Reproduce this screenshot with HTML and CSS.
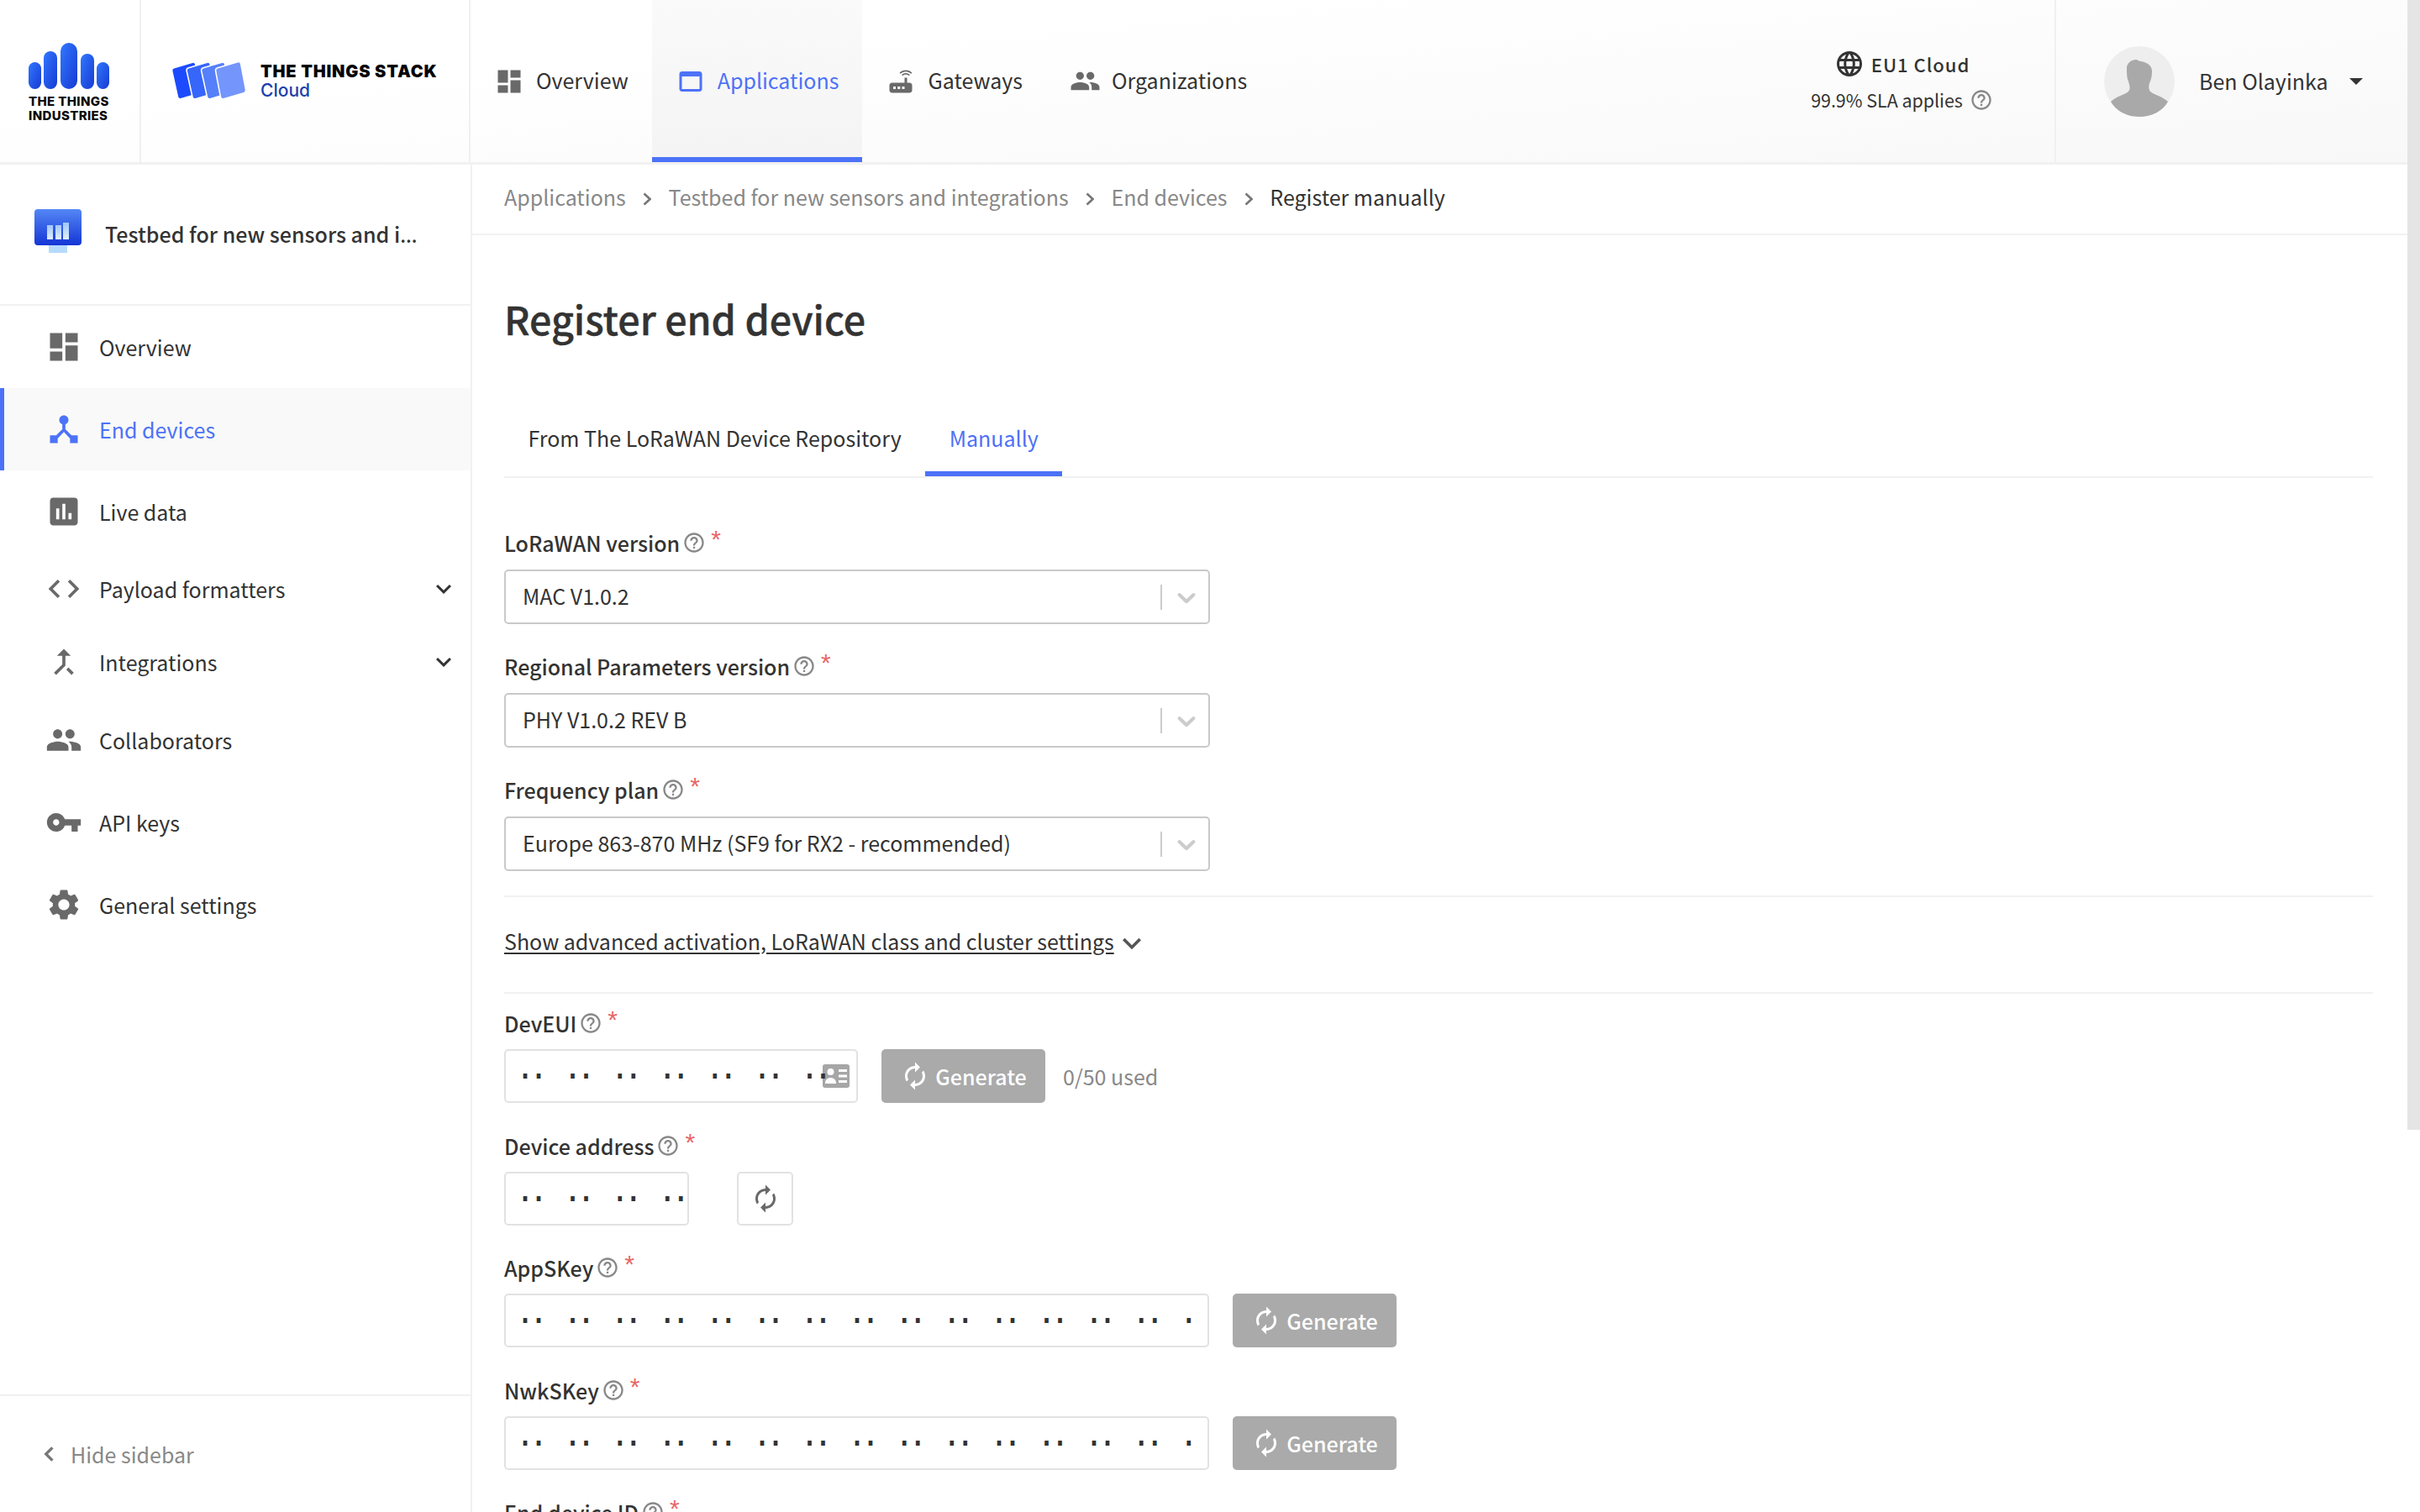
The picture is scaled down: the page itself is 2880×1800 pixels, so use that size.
FILE: index.html
```html
<!DOCTYPE html>
<html lang="en">
<head>
<meta charset="utf-8">
<title>Register end device</title>
<link rel="stylesheet" href="styles.css">
</head>
<body>
<svg class="sprite" xmlns="http://www.w3.org/2000/svg">
  <symbol id="i-dashboard" viewBox="0 0 24 24"><path d="M3 13h8V3H3v10zm0 8h8v-6H3v6zm10 0h8V11h-8v10zm0-18v6h8V3h-8z"/></symbol>
  <symbol id="i-hub" viewBox="0 0 24 24"><path d="M17 16l-4-4V8.82C14.16 8.4 15 7.3 15 6c0-1.66-1.34-3-3-3S9 4.34 9 6c0 1.3.84 2.4 2 2.82V12l-4 4H3v5h5v-3.05l4-4.2 4 4.2V21h5v-5h-4z"/></symbol>
  <symbol id="i-chart" viewBox="0 0 24 24"><path d="M19 3H5c-1.1 0-2 .9-2 2v14c0 1.1.9 2 2 2h14c1.1 0 2-.9 2-2V5c0-1.1-.9-2-2-2zM9 17H7v-7h2v7zm4 0h-2V7h2v10zm4 0h-2v-4h2v4z"/></symbol>
  <symbol id="i-code" viewBox="0 0 24 24"><path d="M9.4 16.6L4.8 12l4.6-4.6L8 6l-6 6 6 6 1.4-1.4zm5.2 0l4.6-4.6-4.6-4.6L16 6l6 6-6 6-1.4-1.4z"/></symbol>
  <symbol id="i-merge" viewBox="0 0 24 24"><path d="M17 20.41L18.41 19 15 15.59 13.59 17 17 20.41zM7.5 8H11v5.59L5.59 19 7 20.41l6-6V8h3.5L12 3.5 7.5 8z"/></symbol>
  <symbol id="i-group" viewBox="0 0 24 24"><path d="M16 11c1.66 0 2.99-1.34 2.99-3S17.66 5 16 5c-1.66 0-3 1.34-3 3s1.34 3 3 3zm-8 0c1.66 0 2.99-1.34 2.99-3S9.66 5 8 5C6.34 5 5 6.34 5 8s1.34 3 3 3zm0 2c-2.33 0-7 1.17-7 3.5V19h14v-2.5c0-2.33-4.67-3.5-7-3.5zm8 0c-.29 0-.62.02-.97.05 1.16.84 1.97 1.97 1.97 3.45V19h6v-2.5c0-2.33-4.67-3.5-7-3.5z"/></symbol>
  <symbol id="i-key" viewBox="0 0 24 24"><path d="M12.65 10C11.83 7.67 9.61 6 7 6c-3.31 0-6 2.69-6 6s2.69 6 6 6c2.61 0 4.83-1.67 5.65-4H17v4h4v-4h2v-4H12.65zM7 14c-1.1 0-2-.9-2-2s.9-2 2-2 2 .9 2 2-.9 2-2 2z"/></symbol>
  <symbol id="i-gear" viewBox="0 0 24 24"><path d="M19.14 12.94c.04-.3.06-.61.06-.94 0-.32-.02-.64-.07-.94l2.03-1.58c.18-.14.23-.41.12-.61l-1.92-3.32c-.12-.22-.37-.29-.59-.22l-2.39.96c-.5-.38-1.03-.7-1.62-.94l-.36-2.54c-.04-.24-.24-.41-.48-.41h-3.84c-.24 0-.43.17-.47.41l-.36 2.54c-.59.24-1.13.57-1.62.94l-2.39-.96c-.22-.08-.47 0-.59.22L2.74 8.87c-.12.21-.08.47.12.61l2.03 1.58c-.05.3-.09.63-.09.94s.02.64.07.94l-2.03 1.58c-.18.14-.23.41-.12.61l1.92 3.32c.12.22.37.29.59.22l2.39-.96c.5.38 1.03.7 1.62.94l.36 2.54c.05.24.24.41.48.41h3.84c.24 0 .44-.17.47-.41l.36-2.54c.59-.24 1.13-.56 1.62-.94l2.39.96c.22.08.47 0 .59-.22l1.92-3.32c.12-.22.07-.47-.12-.61l-2.01-1.58zM12 15.6c-1.98 0-3.6-1.62-3.6-3.6s1.62-3.6 3.6-3.6 3.6 1.62 3.6 3.6-1.62 3.6-3.6 3.6z"/></symbol>
  <symbol id="i-asset" viewBox="0 0 24 24"><path d="M19 4H5c-1.11 0-2 .9-2 2v12c0 1.1.89 2 2 2h14c1.1 0 2-.9 2-2V6c0-1.1-.89-2-2-2zm0 14H5V8h14v10z"/></symbol>
  <symbol id="i-router" viewBox="0 0 24 24"><path d="M20.2 5.9l.8-.8C19.6 3.7 17.8 3 16 3s-3.6.7-5 2.1l.8.8C13 4.8 14.5 4.2 16 4.2s3 .6 4.2 1.7zm-.9.8c-.9-.9-2.1-1.4-3.3-1.4s-2.4.5-3.3 1.4l.8.8c.7-.7 1.6-1 2.5-1 .9 0 1.8.3 2.5 1l.8-.8zM19 13h-2V9h-2v4H5c-1.1 0-2 .9-2 2v4c0 1.1.9 2 2 2h14c1.1 0 2-.9 2-2v-4c0-1.1-.9-2-2-2zM8 18H6v-2h2v2zm3.5 0h-2v-2h2v2zm3.5 0h-2v-2h2v2z"/></symbol>
  <symbol id="i-globe" viewBox="0 0 24 24"><path d="M11.99 2C6.47 2 2 6.48 2 12s4.47 10 9.99 10C17.52 22 22 17.52 22 12S17.52 2 11.99 2zm6.93 6h-2.95c-.32-1.25-.78-2.45-1.38-3.56 1.84.63 3.37 1.91 4.33 3.56zM12 4.04c.83 1.2 1.48 2.53 1.91 3.96h-3.82c.43-1.43 1.08-2.76 1.91-3.96zM4.26 14C4.1 13.36 4 12.69 4 12s.1-1.36.26-2h3.38c-.08.66-.14 1.32-.14 2 0 .68.06 1.34.14 2H4.26zm.82 2h2.95c.32 1.25.78 2.45 1.38 3.56-1.84-.63-3.37-1.9-4.33-3.56zm2.95-8H5.08c.96-1.66 2.49-2.93 4.33-3.56C8.81 5.55 8.35 6.75 8.03 8zM12 19.96c-.83-1.2-1.48-2.53-1.91-3.96h3.82c-.43 1.43-1.08 2.76-1.91 3.96zM14.34 14H9.66c-.09-.66-.16-1.32-.16-2 0-.68.07-1.35.16-2h4.68c.09.65.16 1.32.16 2 0 .68-.07 1.34-.16 2zm.25 5.56c.6-1.11 1.06-2.31 1.38-3.56h2.95c-.96 1.65-2.49 2.93-4.33 3.56zM16.36 14c.08-.66.14-1.32.14-2 0-.68-.06-1.34-.14-2h3.38c.16.64.26 1.31.26 2s-.1 1.36-.26 2h-3.38z"/></symbol>
  <symbol id="i-help" viewBox="0 0 24 24"><path d="M11 18h2v-2h-2v2zm1-16C6.48 2 2 6.48 2 12s4.48 10 10 10 10-4.48 10-10S17.52 2 12 2zm0 18c-4.41 0-8-3.59-8-8s3.59-8 8-8 8 3.59 8 8-3.59 8-8 8zm0-14c-2.21 0-4 1.79-4 4h2c0-1.1.9-2 2-2s2 .9 2 2c0 2-3 1.75-3 5h2c0-2.25 3-2.5 3-5 0-2.21-1.79-4-4-4z"/></symbol>
  <symbol id="i-renew" viewBox="0 0 24 24"><path d="M12 6v3l4-4-4-4v3c-4.42 0-8 3.58-8 8 0 1.57.46 3.03 1.24 4.26L6.7 14.8c-.45-.83-.7-1.79-.7-2.8 0-3.31 2.69-6 6-6zm6.76 1.74L17.3 9.2c.44.84.7 1.79.7 2.8 0 3.31-2.69 6-6 6v-3l-4 4 4 4v-3c4.42 0 8-3.58 8-8 0-1.57-.46-3.03-1.24-4.26z"/></symbol>
  <symbol id="i-more" viewBox="0 0 24 24"><path d="M16.59 8.59L12 13.17 7.41 8.59 6 10l6 6 6-6z"/></symbol>
  <symbol id="i-sel" viewBox="0 0 20 20"><path d="M4.516 7.548c0.436-0.446 1.043-0.481 1.576 0l3.908 3.747 3.908-3.747c0.533-0.481 1.141-0.446 1.574 0 0.436 0.445 0.408 1.197 0 1.615-0.406 0.418-4.695 4.502-4.695 4.502-0.217 0.223-0.502 0.335-0.787 0.335s-0.57-0.112-0.789-0.335c0 0-4.287-4.084-4.695-4.502s-0.436-1.17 0-1.615z"/></symbol>
  <linearGradient id="g-tti" x1="0" y1="0" x2="1" y2="1"><stop offset="0" stop-color="#3277ff"/><stop offset="1" stop-color="#153bd2"/></linearGradient>
  <linearGradient id="g-app" x1="0" y1="0" x2="0" y2="1"><stop offset="0" stop-color="#5387f5"/><stop offset="1" stop-color="#1535d6"/></linearGradient>
  <linearGradient id="g-bar" x1="0" y1="0" x2="0" y2="1"><stop offset="0" stop-color="#9fc6fb"/><stop offset="1" stop-color="#e3f0fe"/></linearGradient>
</svg>

<div class="page">
  <header class="topbar">
    <div class="brand brand-tti">
      <svg class="tti-bars" viewBox="0 0 96 55">
        <rect x="0" y="23" width="15" height="32" rx="7.5" fill="url(#g-tti)"/>
        <rect x="18" y="10" width="16" height="45" rx="8" fill="url(#g-tti)"/>
        <rect x="38" y="0" width="20" height="55" rx="10" fill="url(#g-tti)"/>
        <rect x="62" y="13" width="16" height="42" rx="8" fill="url(#g-tti)"/>
        <rect x="81" y="23" width="15" height="32" rx="7.5" fill="url(#g-tti)"/>
      </svg>
      <div class="tti-name">THE THINGS<br>INDUSTRIES</div>
    </div>
    <div class="brand brand-stack">
      <svg class="stack-cards" viewBox="0 0 92 51">
        <g stroke="#fff" stroke-width="1.5">
          <rect width="28" height="37" rx="3" transform="matrix(1 -.29 .22 1 2 10.500)" fill="#1c4bff"/>
          <rect width="28" height="37" rx="3" transform="matrix(1 -.29 .22 1 19.500 10.500)" fill="#3666fa"/>
          <rect width="28" height="37" rx="3" transform="matrix(1 -.29 .22 1 37 10.500)" fill="#5580fa"/>
          <rect width="30" height="37" rx="3" transform="matrix(1 -.29 .19 1 54 10.500)" fill="#7495fc"/>
        </g>
      </svg>
      <div class="stack-name">
        <div class="stack-title">THE THINGS STACK</div>
        <div class="stack-sub">Cloud</div>
      </div>
    </div>
    <nav class="mainnav">
      <a class="mainnav-item"><svg class="mainnav-icon"><use href="#i-dashboard"/></svg><span>Overview</span></a>
      <a class="mainnav-item is-active"><svg class="mainnav-icon"><use href="#i-asset"/></svg><span>Applications</span></a>
      <a class="mainnav-item"><svg class="mainnav-icon"><use href="#i-router"/></svg><span>Gateways</span></a>
      <a class="mainnav-item item-org"><svg class="mainnav-icon wide"><use href="#i-group"/></svg><span>Organizations</span></a>
    </nav>
    <div class="cluster">
      <div class="cluster-name"><svg class="cluster-globe"><use href="#i-globe"/></svg><span>EU1 Cloud</span></div>
      <div class="cluster-sla"><span>99.9% SLA applies</span><svg class="help"><use href="#i-help"/></svg></div>
    </div>
    <div class="user">
      <svg class="avatar" viewBox="0 0 84 84">
        <circle cx="42" cy="42" r="42" fill="#eeeeee"/>
        <path d="M8 66 C14 60 24 58 29 54 C32 50 30 46 29 42 C27 38 27 32 27 26 C27 20 33 16 38 16 C40 16 41 18 44 18 C50 19 57 22 57 30 C57 36 56 40 54 44 C53 48 53 51 55 54 C60 58 70 60 76 66 C70 77 57 84 42 84 C27 84 14 77 8 66Z" fill="#a9a9a9"/>
      </svg>
      <span class="user-name">Ben Olayinka</span>
      <i class="caret"></i>
    </div>
  </header>

  <div class="body">
    <aside class="sidebar">
      <div class="app-head">
        <svg class="app-icon" viewBox="0 0 56 52">
          <rect x="17" y="42" width="22" height="10" fill="#b6dafc"/>
          <rect x="0" y="0" width="56" height="43" rx="4" fill="url(#g-app)"/>
          <rect x="15" y="19" width="7" height="17" fill="url(#g-bar)"/>
          <rect x="25" y="19" width="7" height="17" fill="url(#g-bar)"/>
          <rect x="34" y="16" width="7" height="20" fill="url(#g-bar)"/>
        </svg>
        <div class="app-name">Testbed for new sensors and i<span class="ellipsis">…</span></div>
      </div>
      <nav class="sidenav">
        <a class="side-item"><svg class="side-icon"><use href="#i-dashboard"/></svg><span>Overview</span></a>
        <a class="side-item is-active"><svg class="side-icon"><use href="#i-hub"/></svg><span>End devices</span></a>
        <a class="side-item"><svg class="side-icon"><use href="#i-chart"/></svg><span>Live data</span></a>
        <a class="side-item is-group"><svg class="side-icon"><use href="#i-code"/></svg><span>Payload formatters</span><svg class="side-more"><use href="#i-more"/></svg></a>
        <a class="side-item is-group"><svg class="side-icon"><use href="#i-merge"/></svg><span>Integrations</span><svg class="side-more"><use href="#i-more"/></svg></a>
        <a class="side-item"><svg class="side-icon"><use href="#i-group"/></svg><span>Collaborators</span></a>
        <a class="side-item"><svg class="side-icon"><use href="#i-key"/></svg><span>API keys</span></a>
        <a class="side-item"><svg class="side-icon"><use href="#i-gear"/></svg><span>General settings</span></a>
      </nav>
      <div class="side-foot">
        <svg class="foot-chevron" viewBox="0 0 12 20"><path d="M10 3 3 10l7 7" fill="none" stroke="#777" stroke-width="3"/></svg>
        <span>Hide sidebar</span>
      </div>
    </aside>

    <main class="main">
      <div class="crumbs">
        <a>Applications</a><svg class="crumb-sep" viewBox="0 0 10 16"><path d="M1.500 1.500 8.500 8l-7 6.500" fill="none" stroke="#777" stroke-width="2.600"/></svg>
        <a>Testbed for new sensors and integrations</a><svg class="crumb-sep" viewBox="0 0 10 16"><path d="M1.500 1.500 8.500 8l-7 6.500" fill="none" stroke="#777" stroke-width="2.600"/></svg>
        <a>End devices</a><svg class="crumb-sep" viewBox="0 0 10 16"><path d="M1.500 1.500 8.500 8l-7 6.500" fill="none" stroke="#777" stroke-width="2.600"/></svg>
        <span class="crumb-current">Register manually</span>
      </div>
      <div class="content">
        <h1 class="title">Register end device</h1>
        <div class="tabs">
          <a class="tab">From The LoRaWAN Device Repository</a>
          <a class="tab is-active">Manually</a>
        </div>

        <div class="selects">
          <div class="field">
            <label class="label">LoRaWAN version<svg class="help"><use href="#i-help"/></svg><sup class="req">*</sup></label>
            <div class="select"><span class="select-value">MAC V1.0.2</span><i class="select-sep"></i><svg class="select-chev"><use href="#i-sel"/></svg></div>
          </div>
          <div class="field">
            <label class="label">Regional Parameters version<svg class="help"><use href="#i-help"/></svg><sup class="req">*</sup></label>
            <div class="select"><span class="select-value">PHY V1.0.2 REV B</span><i class="select-sep"></i><svg class="select-chev"><use href="#i-sel"/></svg></div>
          </div>
          <div class="field">
            <label class="label">Frequency plan<svg class="help"><use href="#i-help"/></svg><sup class="req">*</sup></label>
            <div class="select"><span class="select-value">Europe 863-870 MHz (SF9 for RX2 - recommended)</span><i class="select-sep"></i><svg class="select-chev"><use href="#i-sel"/></svg></div>
          </div>
        </div>

        <div class="advanced"><a class="advanced-link">Show advanced activation, LoRaWAN class and cluster settings</a><svg class="advanced-chev"><use href="#i-more"/></svg></div>

        <div class="keys">
          <div class="field-key">
            <label class="label">DevEUI<svg class="help"><use href="#i-help"/></svg><sup class="req">*</sup></label>
            <div class="key-row">
              <div class="byte-input w-eui"><span class="bytes">·· ·· ·· ·· ·· ·· ··</span>
                <svg class="qr-icon" viewBox="0 0 32 28"><rect width="32" height="28" rx="3" fill="#a6a6a6"/><circle cx="9.500" cy="9" r="4" fill="#fff"/><path d="M3 23c0-5 3-7 6.500-7s6.500 2 6.500 7z" fill="#fff"/><path d="M19 6h10v3H19zM19 12.500h10v3H19zM19 19h10v3H19z" fill="#fff"/></svg>
              </div>
              <button class="generate"><svg class="gen-icon"><use href="#i-renew"/></svg>Generate</button>
              <span class="used">0/50 used</span>
            </div>
          </div>
          <div class="field-key">
            <label class="label">Device address<svg class="help"><use href="#i-help"/></svg><sup class="req">*</sup></label>
            <div class="key-row">
              <div class="byte-input w-addr"><span class="bytes">·· ·· ·· ··</span></div>
              <button class="refresh"><svg class="gen-icon"><use href="#i-renew"/></svg></button>
            </div>
          </div>
          <div class="field-key">
            <label class="label">AppSKey<svg class="help"><use href="#i-help"/></svg><sup class="req">*</sup></label>
            <div class="key-row">
              <div class="byte-input w-key"><span class="bytes">·· ·· ·· ·· ·· ·· ·· ·· ·· ·· ·· ·· ·· ·· ·</span></div>
              <button class="generate"><svg class="gen-icon"><use href="#i-renew"/></svg>Generate</button>
            </div>
          </div>
          <div class="field-key">
            <label class="label">NwkSKey<svg class="help"><use href="#i-help"/></svg><sup class="req">*</sup></label>
            <div class="key-row">
              <div class="byte-input w-key"><span class="bytes">·· ·· ·· ·· ·· ·· ·· ·· ·· ·· ·· ·· ·· ·· ·</span></div>
              <button class="generate"><svg class="gen-icon"><use href="#i-renew"/></svg>Generate</button>
            </div>
          </div>
          <div class="field-key">
            <label class="label">End device ID<svg class="help"><use href="#i-help"/></svg><sup class="req">*</sup></label>
          </div>
        </div>
      </div>
    </main>
  </div>
</div>
<div class="scroll-thumb"></div>
</body>
</html>
```

FILE: styles.css
```css
* { box-sizing: border-box; }
html, body { margin: 0; height: 1800px; overflow: hidden; background: #fff; }
body {
  font-family: "Noto Sans CJK SC", "Noto Sans", sans-serif;
  font-size: 25px;
  line-height: 32px;
  color: #333;
  position: relative;
}
.sprite { position: absolute; width: 0; height: 0; }
svg { fill: currentColor; flex: none; display: block; }
a { color: inherit; text-decoration: none; }

.page { width: 2865px; height: 1800px; display: flex; flex-direction: column; }

/* top bar */
.topbar {
  height: 196px;
  flex: none;
  display: flex;
  border-bottom: 3px solid #f1f1f1;
  background: linear-gradient(175deg, #fff 30%, #f8f8f8 100%);
}
.brand { border-right: 2px solid #f0f0f0; flex: none; }
.brand-tti { width: 168px; padding: 51px 0 0 34px; }
.tti-bars { width: 96px; height: 55px; }
.tti-name {
  font-family: Inter, "Liberation Sans", sans-serif;
  font-weight: 800;
  font-size: 15px;
  line-height: 17px;
  letter-spacing: .35px;
  color: #0a0a0a;
  margin-top: 6px;
  white-space: nowrap;
}
.brand-stack { width: 392px; display: flex; align-items: center; padding-left: 36px; }
.stack-cards { width: 92px; height: 51px; margin-top: -1px; margin-left: -2px; }
.stack-name { margin-left: 16px; margin-top: -2px; }
.stack-title {
  font-family: Inter, "Liberation Sans", sans-serif;
  font-weight: 900;
  font-size: 20px;
  line-height: 24px;
  letter-spacing: .8px;
  color: #050505;
  white-space: nowrap;
}
.stack-sub {
  font-family: Inter, "Liberation Sans", sans-serif;
  font-weight: 500;
  font-size: 21px;
  line-height: 22px;
  color: #1c3fae;
}
.mainnav { display: flex; height: 193px; flex: none; }
.mainnav-item {
  display: flex;
  align-items: center;
  padding: 6px 28px 0;
  gap: 14px;
  color: #333;
  border-bottom: 6px solid transparent;
}
.mainnav-item span { margin-top: -3px; }
.mainnav-icon { width: 36px; height: 36px; color: #696969; }
.mainnav-icon.wide { width: 37px; height: 37px; }
.item-org { gap: 13px; }
.mainnav-item.is-active {
  color: #4c72f7;
  background: linear-gradient(#fafafa, #f4f4f4);
  border-bottom-color: #4c72f7;
}
.mainnav-item.is-active .mainnav-icon { color: #4c72f7; }

.cluster {
  margin-left: auto;
  width: 369px;
  border-right: 2px solid #f0f0f0;
  display: flex;
  flex-direction: column;
  align-items: center;
  justify-content: center;
  gap: 9px;
  padding: 0 0 0 4px;
  flex: none;
}
.cluster-name { display: flex; align-items: center; gap: 8px; font-size: 22px; font-weight: 500; letter-spacing: 1px; line-height: 32px; }
.cluster-globe { width: 36px; height: 36px; color: #333; }
.cluster-sla { display: flex; align-items: center; gap: 8px; font-size: 21.400px; line-height: 32px; }
.help { width: 28px; height: 28px; color: #888; }
.user { width: 418px; display: flex; align-items: center; flex: none; padding-left: 57px; }
.avatar { width: 84px; height: 84px; margin-right: 29px; }
.user-name { color: #333; margin-top: -2px; }
.caret {
  width: 0; height: 0; margin-left: 25px;
  border-left: 8px solid transparent;
  border-right: 8px solid transparent;
  border-top: 8px solid #333;
}

/* body */
.body { flex: 1; min-height: 0; display: flex; }
.sidebar {
  width: 562px;
  flex: none;
  border-right: 2px solid #f1f1f1;
  display: flex;
  flex-direction: column;
}
.app-head {
  height: 168px;
  flex: none;
  display: flex;
  align-items: center;
  border-bottom: 2px solid #f1f1f1;
  padding: 0 50px 0 41px;
}
.app-icon { width: 56px; height: 52px; margin-top: -8px; }
.app-name {
  margin-left: 28px;
  margin-top: -2px;
  font-weight: 500;
  color: #333;
  white-space: nowrap;
}
.ellipsis { font-family: "Noto Sans", sans-serif; letter-spacing: 3.500px; }
.sidenav { flex: 1; display: flex; flex-direction: column; }
.side-item {
  height: 98px;
  flex: none;
  display: flex;
  align-items: center;
  padding-left: 54px;
  padding-right: 14px;
  gap: 20px;
  color: #333;
}
.side-item.is-group { height: 87px; padding-bottom: 2px; }
.side-icon { width: 44px; height: 44px; color: #696969; }
.side-more { width: 36px; height: 36px; margin-left: auto; color: #333; }
.side-item.is-active {
  background: #f9f9f9;
  color: #4c72f7;
  box-shadow: inset 5px 0 0 #4c72f7;
}
.side-item.is-active .side-icon { color: #4c72f7; }
.side-foot {
  height: 140px;
  flex: none;
  display: flex;
  align-items: center;
  border-top: 2px solid #f1f1f1;
  padding-left: 51px;
  gap: 19px;
  color: #888;
}
.foot-chevron { width: 14px; height: 22px; }

.main { flex: 1; min-width: 0; display: flex; flex-direction: column; overflow: hidden; }
.crumbs {
  height: 84px;
  flex: none;
  display: flex;
  align-items: center;
  gap: 20.400px;
  padding: 0 0 7px 38px;
  border-bottom: 2px solid #f1f1f1;
  color: #888;
}
.crumb-sep { width: 10px; height: 16px; margin-top: 7px; }
.crumb-current { color: #333; }
.content { padding: 66px 41px 0 38px; }
.title {
  margin: 0;
  font-size: 46.600px;
  line-height: 66px;
  height: 70px;
  font-weight: 500;
  color: #333;
  -webkit-text-stroke: .4px #333;
}
.tabs {
  margin-top: 63px;
  height: 90px;
  display: flex;
  border-bottom: 2px solid #f1f1f1;
}
.tab {
  height: 88px;
  padding: 0 28.500px 5px;
  display: flex;
  align-items: center;
  color: #333;
}
.tab.is-active { color: #4c72f7; box-shadow: inset 0 -6px 0 #4c72f7; }

.selects { margin-top: 63px; display: flex; flex-direction: column; gap: 36px; }
.label {
  display: flex;
  align-items: center;
  height: 32px;
  font-weight: 500;
  color: #333;
  gap: 3px;
  white-space: nowrap;
  padding-bottom: 2px;
}
.selects .label { padding-bottom: 5px; }
.label .help { width: 28px; height: 28px; }
.req {
  color: #e86767;
  font-family: "Liberation Sans", sans-serif;
  font-size: 30px;
  line-height: 20px;
  margin: -8px 0 0 3px;
  font-weight: 400;
}
.select {
  margin-top: 14px;
  width: 840px;
  height: 65px;
  border: 2.500px solid #c9c9c9;
  border-radius: 5px;
  display: flex;
  align-items: center;
  padding: 0 8px 0 20px;
}
.select-value { flex: 1; margin-top: -4px; }
.select-sep { width: 2px; height: 30px; background: #ccc; margin-right: 11px; }
.select-chev { width: 36px; height: 36px; color: #ccc; }

.advanced {
  margin-top: 29px;
  height: 117px;
  border-top: 2px solid #f1f1f1;
  border-bottom: 2px solid #f1f1f1;
  display: flex;
  align-items: center;
  padding-bottom: 10px;
}
.advanced-link { text-decoration: underline; text-underline-offset: 3px; color: #333; }
.advanced-chev { width: 44px; height: 44px; color: #555; margin-left: -1px; margin-top: 6px; }

.keys { margin-top: 20px; display: flex; flex-direction: column; gap: 35.500px; }
.key-row { margin-top: 14px; display: flex; align-items: center; height: 64px; }
.byte-input {
  position: relative;
  height: 64px;
  border: 2.500px solid #e2e2e2;
  border-radius: 5px;
  overflow: hidden;
  display: flex;
  align-items: center;
  padding: 2px 18px 0 11px;
  flex: none;
}
.w-eui { width: 421px; }
.w-addr { width: 220px; padding-right: 0; }
.w-key { width: 839px; }
.bytes {
  position: relative;
  z-index: 1;
  font-family: "Liberation Mono", monospace;
  font-size: 40px;
  line-height: 40px;
  font-weight: 400;
  letter-spacing: -8px;
  word-spacing: 8.400px;
  color: #333;
  white-space: pre;
}
.qr-icon { position: absolute; right: 8px; top: 16px; width: 32px; height: 28px; }
.generate {
  margin-left: 28px;
  width: 195px;
  height: 64px;
  background: #aaa;
  border: 0;
  border-radius: 5px;
  color: #fff;
  font: 500 25px/32px "Noto Sans CJK SC", "Noto Sans", sans-serif;
  display: flex;
  align-items: center;
  justify-content: center;
  gap: 6px;
  padding: 0;
}
.gen-icon { width: 36px; height: 36px; }
.used { margin-left: 21px; color: #888; }
.refresh {
  margin-left: 57px;
  width: 67px;
  height: 64px;
  background: #fff;
  border: 2.500px solid #e2e2e2;
  border-radius: 5px;
  color: #696969;
  display: flex;
  align-items: center;
  justify-content: center;
  padding: 0;
}

.scroll-thumb { position: absolute; right: 0; top: 0; width: 15px; height: 1345px; background: #e5e5e5; }
```
